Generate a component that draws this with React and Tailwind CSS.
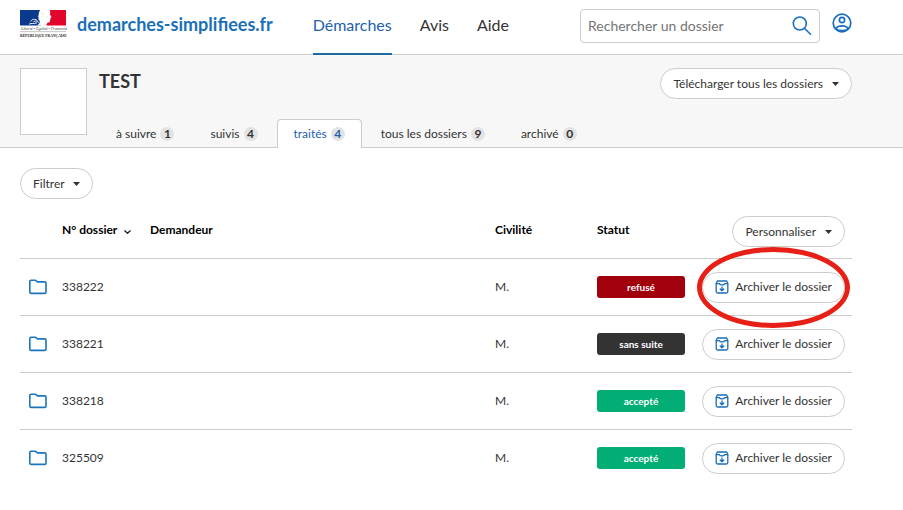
import React from "react";

const tabs = [
  { label: "à suivre", count: 1 },
  { label: "suivis", count: 4 },
  { label: "traités", count: 4, active: true },
  { label: "tous les dossiers", count: 9 },
  { label: "archivé", count: 0 },
];

const dossiers = [
  { id: "338222", status: "refusé", color: "bg-[#a1000c]", circled: true },
  { id: "338221", status: "sans suite", color: "bg-[#333333]" },
  { id: "338218", status: "accepté", color: "bg-[#03ad76]" },
  { id: "325509", status: "accepté", color: "bg-[#03ad76]" },
];

function Logo() {
  return (
    <svg className="h-[29px] w-[47px] shrink-0" viewBox="0 0 47 29" role="img" aria-label="République Française">
      <rect x="0" y="0" width="21" height="15.5" fill="#0b3a8c" />
      <rect x="26" y="0" width="20" height="15.5" fill="#e2062a" />
      <path d="M20 0H30L30.300 2.500L29.800 4.200L31.600 7.300L30.300 8.200L30.600 9.500L29.800 10.200L30 11.800C29 13 26.500 12 26.500 15.500H17C19.500 14 20.500 12.500 19.500 10.500C17.500 9.500 19.500 8 18 6.800C19.500 6 17.500 4.500 19.200 3.800C18 2.500 20 1.500 20 0Z" fill="#fff" />
      <path d="M9 14.200C12 12.500 13 14.500 17 12.800M10.500 11.500C12.500 8.500 16 9 17.500 10.800M13.500 12C15.500 10.300 18 11 19.500 13.500" fill="none" stroke="#fff" strokeWidth="0.9" />
      <path d="M21.500 4C22.500 2.800 24 3.200 23.500 5M26.500 6.500L28 6.300" fill="none" stroke="#cfd3da" strokeWidth="0.6" />
      <text x="1" y="20.300" className="fill-[#444444] font-['Liberation_Serif',serif] text-[4px] italic">Liberté • Égalité • Fraternité</text>
      <rect x="0" y="21.500" width="46" height="0.6" fill="#999" />
      <text x="0" y="26.500" className="fill-[#222222] font-['Liberation_Serif',serif] text-[3.7px] font-bold">RÉPUBLIQUE FRANÇAISE</text>
    </svg>
  );
}

function Caret() {
  return (
    <svg className="h-1 w-[7px]" viewBox="0 0 7 4" aria-hidden="true">
      <path d="M0 0H7L3.500 4Z" fill="#333" />
    </svg>
  );
}

function PillButton({ children }) {
  return (
    <button type="button" className="inline-flex h-[31px] items-center whitespace-nowrap rounded-full border border-[#cccccc] bg-white px-3 text-[12px] leading-4 text-[#333333]">
      {children}
    </button>
  );
}

function FolderIcon() {
  return (
    <svg className="block h-4 w-5" viewBox="0 0 20 16" fill="none" stroke="#1a75bc" strokeWidth="1.600" strokeLinejoin="round" aria-hidden="true">
      <path d="M1.800 13V2.500Q1.800 1.300 3 1.300H7.500L9.500 2.900H16.800Q18 2.900 18 4.100V13Q18 14.400 16.600 14.400H3.200Q1.800 14.400 1.800 13Z" />
    </svg>
  );
}

function ArchiveIcon() {
  return (
    <svg className="h-[14px] w-[14px]" viewBox="0 0 14 14" fill="none" stroke="#1a6db8" strokeWidth="1.300" strokeLinejoin="round" strokeLinecap="round" aria-hidden="true">
      <path d="M1.200 3.600V11.500Q1.200 13 2.700 13H11.300Q12.800 13 12.800 11.500V3.600" />
      <path d="M1.200 3.600L2.300 1H11.700L12.800 3.600H9.700Q9 4.900 7 4.900T4.300 3.600Z" />
      <path d="M7 7V10.500M5.200 9L7 10.800L8.800 9" />
    </svg>
  );
}

export default function App() {
  return (
    <div className="font-[Lato,'Open_Sans',sans-serif] text-[#333333]">
      <header className="flex h-[55px] items-start border-b border-[#cccccc] pl-5 pr-[51px]">
        <a href="#accueil" className="mt-[10px] flex items-start gap-[10px]">
          <Logo />
          <span className="text-[18px] font-bold leading-7 text-[#1a6fb9]">demarches-simplifiees.fr</span>
        </a>
        <nav className="ml-auto flex gap-7 text-[16px] leading-6">
          <a href="#demarches" className="h-[55px] border-b-2 border-[#1d6a9f] pt-[13px] text-[#2260b0]">Démarches</a>
          <a href="#avis" className="pt-[13px]">Avis</a>
          <a href="#aide" className="pt-[13px]">Aide</a>
        </nav>
        <form className="ml-[71px] mt-[9px] flex h-[34px] w-[240px] items-center rounded border border-[#cccccc] pl-[7px] pr-[7px]">
          <input type="search" aria-label="Rechercher un dossier" placeholder="Rechercher un dossier" className="min-w-0 flex-1 text-[14px] leading-5 outline-none placeholder:text-[#757575]" />
          <button type="submit" aria-label="Rechercher">
            <svg className="h-5 w-5" viewBox="0 0 20 20" fill="none" stroke="#1a6fc0" strokeWidth="1.600" aria-hidden="true">
              <circle cx="7.800" cy="7.500" r="6.500" />
              <path d="M12.400 12.300L19 18.700" />
            </svg>
          </button>
        </form>
        <button type="button" aria-label="Mon compte" className="ml-3 mt-[13px]">
          <svg className="block h-5 w-5" viewBox="0 0 20 20" fill="none" stroke="#1a6fc0" strokeWidth="1.700" aria-hidden="true">
            <circle cx="10" cy="10" r="8.800" />
            <circle cx="10" cy="7" r="2.600" />
            <path d="M3.800 15.800C5.500 11.800 14.500 11.800 16.200 15.800C13 18.300 7 18.300 3.800 15.800Z" />
          </svg>
        </button>
      </header>

      <section className="flex h-[93px] items-end border-b border-[#cccccc] bg-[#f7f7f7] pl-5 pr-[51px]">
        <div className="mb-3 h-[67px] w-[67px] shrink-0 border border-[#cccccc] bg-white" />
        <div className="flex h-full flex-1 flex-col justify-between">
          <div className="flex items-start justify-between pl-3 pt-[13px]">
            <h1 className="text-[18px] font-bold leading-[26px]">TEST</h1>
            <PillButton>
              <span className="mr-[9px]">Télécharger tous les dossiers</span>
              <Caret />
            </PillButton>
          </div>
          <nav className="-mb-px ml-3 flex gap-[2px] text-[12px] leading-4">
            {tabs.map((tab) => (
              <a
                key={tab.label}
                href={"#" + tab.label}
                className={
                  tab.active
                    ? "flex h-[29px] items-center gap-1 rounded-t-sm border border-b-0 border-[#cccccc] bg-white px-4 text-[#2260b0]"
                    : "flex h-[29px] items-center gap-1 border border-b-0 border-transparent px-4"
                }
              >
                {tab.label}
                <span className="h-[14px] w-[14px] rounded-full bg-[#e3e3e3] text-center font-bold leading-[14px]">{tab.count}</span>
              </a>
            ))}
          </nav>
        </div>
      </section>

      <main className="pl-5 pr-[51px] pt-5">
        <PillButton>
          <span className="mr-2">Filtrer</span>
          <Caret />
        </PillButton>
        <table className="mt-[6px] w-full table-fixed border-separate border-spacing-0 text-left text-[12px] leading-4">
          <thead>
            <tr className="h-[54px] text-black">
              <td className="w-[42px] border-b border-[#cccccc]" />
              <th className="w-[88px] border-b border-[#cccccc] pb-[3px] font-bold">
                <span className="flex items-center gap-[7px] whitespace-nowrap">
                  N° dossier
                  <svg className="mt-1 h-1 w-[7px]" viewBox="0 0 7 4" fill="none" stroke="#222" strokeWidth="1.300" aria-hidden="true">
                    <path d="M0.500 0.500L3.500 3.300L6.500 0.500" />
                  </svg>
                </span>
              </th>
              <th className="border-b border-[#cccccc] pb-[3px] font-bold">Demandeur</th>
              <th className="w-[102px] border-b border-[#cccccc] pb-[3px] font-bold">Civilité</th>
              <th className="w-[88px] border-b border-[#cccccc] pb-[3px] font-bold">Statut</th>
              <th className="w-[167px] border-b border-[#cccccc] pr-[7px] text-right font-normal">
                <PillButton>
                  <span className="mr-[9px]">Personnaliser</span>
                  <Caret />
                </PillButton>
              </th>
            </tr>
          </thead>
          <tbody>
            {dossiers.map((d) => (
              <tr key={d.id} className="h-[57px] [&>td]:border-b [&>td]:border-[#cccccc] [&:last-child>td]:border-transparent">
                <td className="pl-2"><FolderIcon /></td>
                <td className="pb-px"><a href={"#" + d.id}>{d.id}</a></td>
                <td />
                <td className="pb-px">M.</td>
                <td>
                  <span className={"block rounded-[3px] text-center text-[10px] font-bold leading-[22px] text-white " + d.color}>{d.status}</span>
                </td>
                <td className="pr-[7px] text-right">
                  <span className="relative inline-block align-middle">
                    <PillButton>
                      <ArchiveIcon />
                      <span className="ml-[6px]">Archiver le dossier</span>
                    </PillButton>
                    {d.circled && (
                      <span className="pointer-events-none absolute -inset-x-[5px] -inset-y-[25px] rounded-[50%] border-[5px] border-[#e81f16]" />
                    )}
                  </span>
                </td>
              </tr>
            ))}
          </tbody>
        </table>
      </main>
    </div>
  );
}
